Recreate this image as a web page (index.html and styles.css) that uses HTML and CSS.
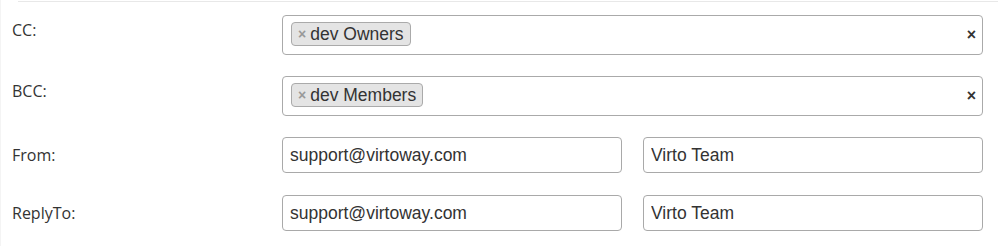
FILE: index.html
```html
<!DOCTYPE html>
<html>
<head>
<meta charset="utf-8">
<link rel="stylesheet" href="styles.css">
</head>
<body>
<div class="page">
  <div class="topline"></div>
  <form class="form">
    <div class="row row-select">
      <label class="label">CC:</label>
      <div class="field">
        <div class="select">
          <ul class="choices">
            <li class="choice"><span class="remove">×</span>dev Owners</li>
          </ul>
          <span class="clear">×</span>
        </div>
      </div>
    </div>
    <div class="row row-select">
      <label class="label">BCC:</label>
      <div class="field">
        <div class="select">
          <ul class="choices">
            <li class="choice"><span class="remove">×</span>dev Members</li>
          </ul>
          <span class="clear">×</span>
        </div>
      </div>
    </div>
    <div class="row row-input">
      <label class="label">From:</label>
      <div class="field pair">
        <input class="input" type="text" value="support@virtoway.com">
        <input class="input" type="text" value="Virto Team">
      </div>
    </div>
    <div class="row row-input">
      <label class="label">ReplyTo:</label>
      <div class="field pair">
        <input class="input" type="text" value="support@virtoway.com">
        <input class="input" type="text" value="Virto Team">
      </div>
    </div>
  </form>
</div>
</body>
</html>
```
FILE: styles.css
```css
html, body {
  margin: 0;
  padding: 0;
  background: #fff;
}
.page {
  width: 998px;
  height: 246px;
  border-left: 1px solid #f4f4f4;
  box-sizing: border-box;
  padding-top: 1px;
}
.topline {
  margin-left: 17px;
  border-top: 1px solid #e8e8e8;
  height: 0;
}
.form {
  margin: 0;
  padding-top: 13px;
}
.row {
  display: flex;
  align-items: flex-start;
  margin-bottom: 21px;
}
.row-input {
  margin-bottom: 22px;
}
.label {
  width: 281px;
  padding-left: 11px;
  box-sizing: border-box;
  font-family: "Open Sans", "Noto Sans", sans-serif;
  font-size: 16px;
  line-height: 22px;
  color: #333;
  flex: none;
}
.row-select .label {
  padding-top: 4px;
}
.row-input .label {
  padding-top: 7px;
}
.field {
  width: 701px;
  flex: none;
}
.select {
  height: 40px;
  border: 1px solid #aaa;
  border-radius: 4px;
  box-sizing: border-box;
  display: flex;
  align-items: flex-start;
  padding: 0 6px 0 8px;
}
.choices {
  list-style: none;
  margin: 6px 0 0 0;
  padding: 0;
  flex: 1;
  display: flex;
}
.choice {
  font-family: "Liberation Sans", Arial, sans-serif;
  font-size: 17.5px;
  color: #333;
  background: #e4e4e4;
  border: 1px solid #aaa;
  border-radius: 4px;
  height: 24px;
  line-height: 22px;
  box-sizing: border-box;
  padding: 0 6px 0 6px;
  display: flex;
  align-items: center;
}
.remove {
  color: #999;
  font-weight: bold;
  font-size: 14px;
  margin-right: 4px;
}
.clear {
  align-self: center;
  font-family: "Liberation Sans", Arial, sans-serif;
  font-weight: bold;
  font-size: 16px;
  color: #333;
  line-height: 16px;
}
.pair {
  display: flex;
  gap: 21px;
}
.input {
  width: 340px;
  height: 36px;
  box-sizing: border-box;
  border: 1px solid #a9a9a9;
  border-radius: 4px;
  padding: 0 7px;
  margin: 0;
  font-family: "Liberation Sans", Arial, sans-serif;
  font-size: 17.5px;
  color: #333;
  background: #fff;
  outline: none;
}
```
